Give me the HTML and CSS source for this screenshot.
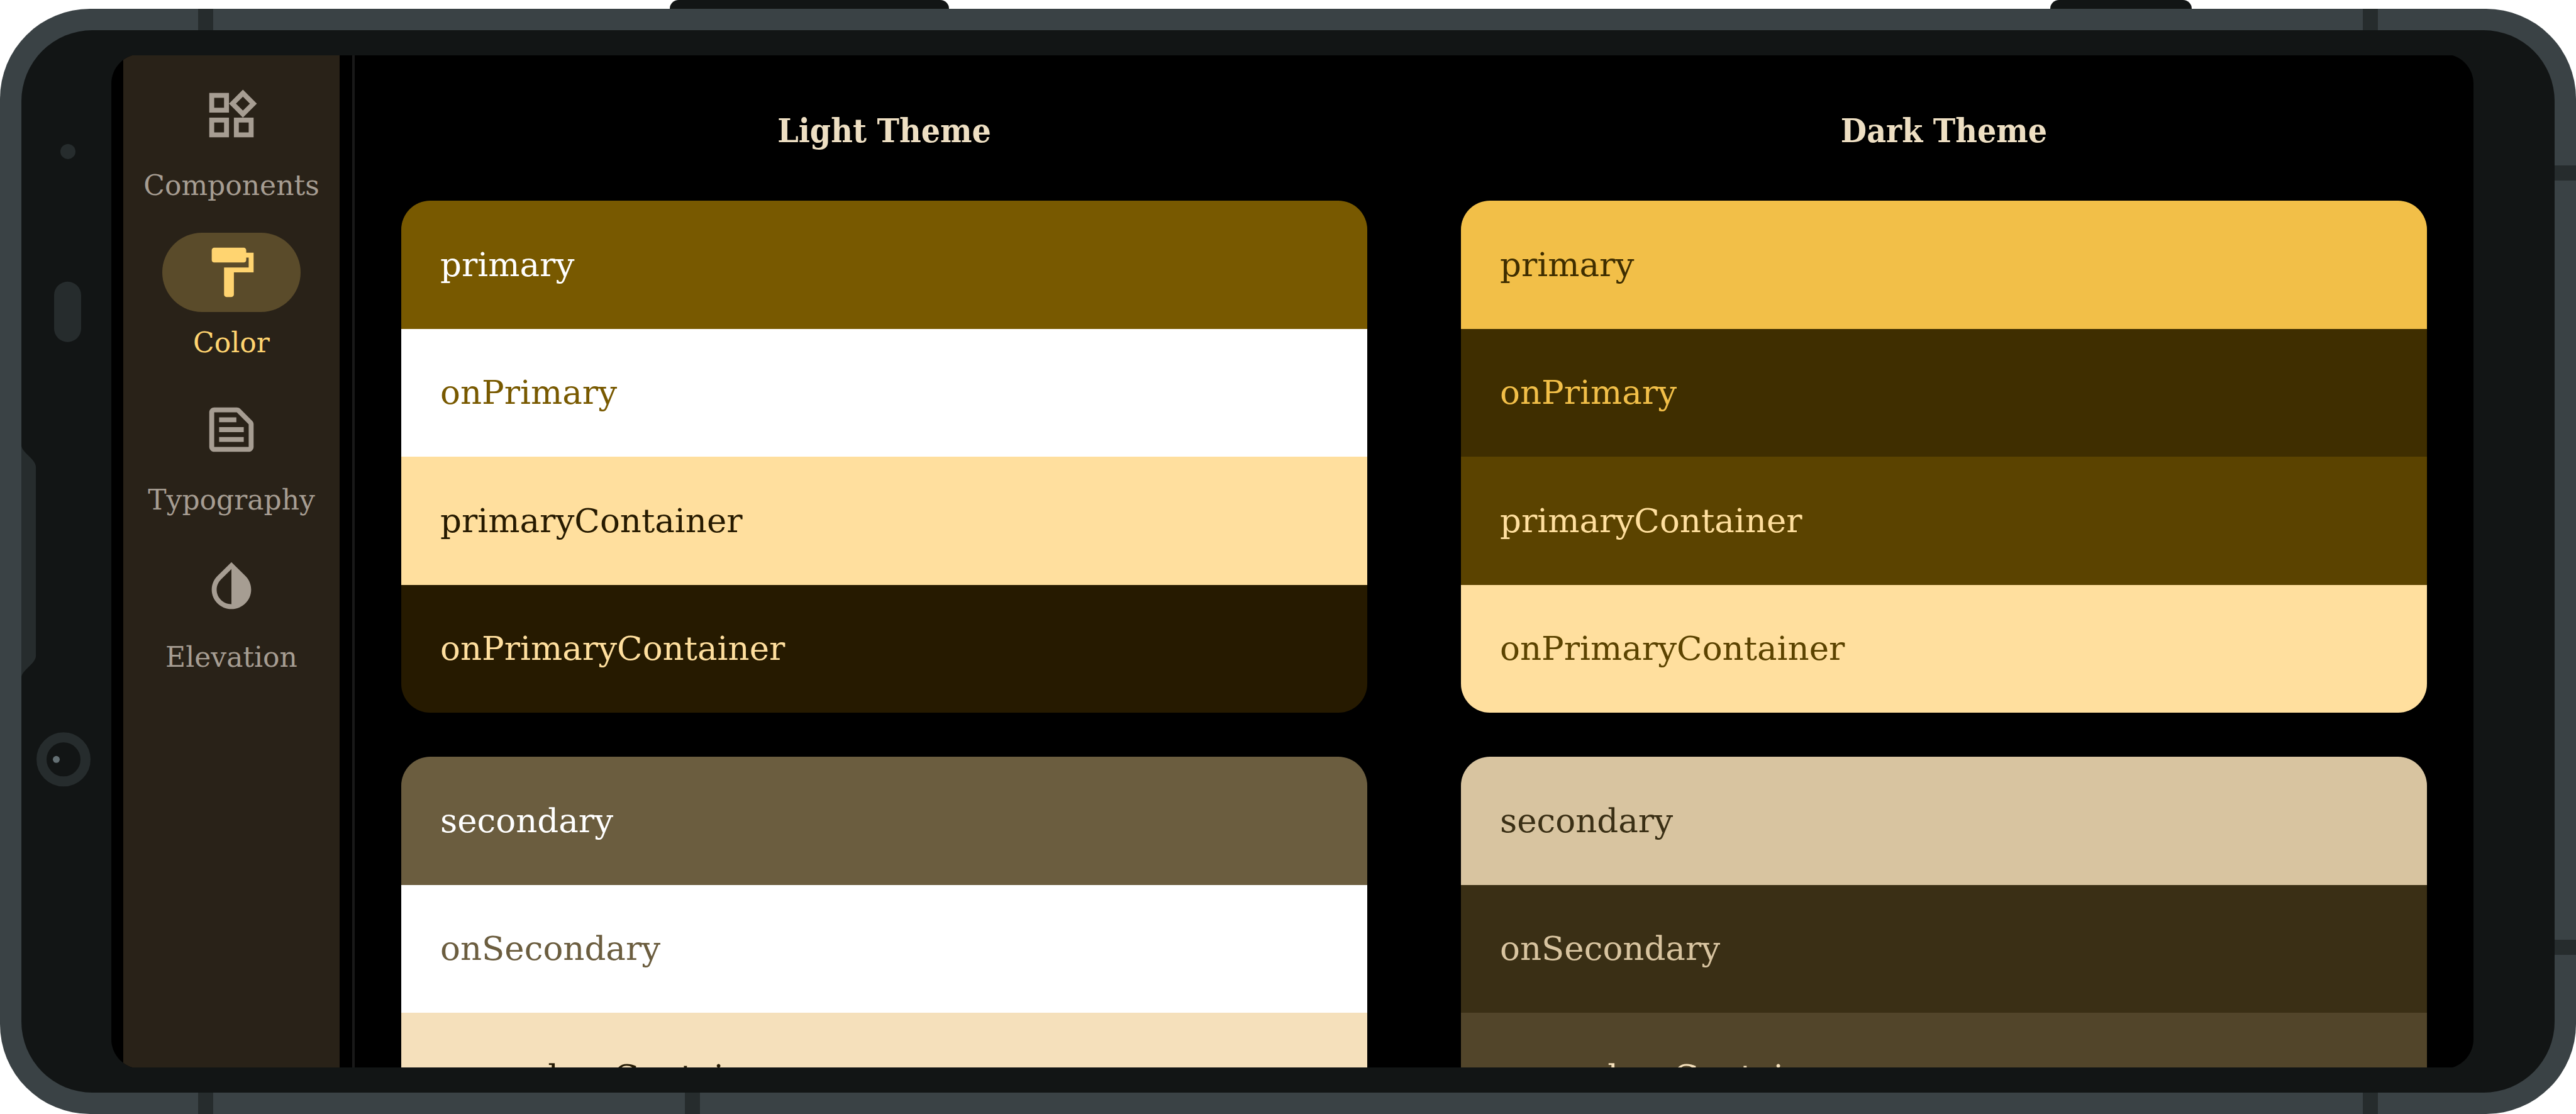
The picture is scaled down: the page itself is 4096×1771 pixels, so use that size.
FILE: index.html
```html
<!DOCTYPE html>
<html lang="en">
<head>
<meta charset="utf-8">
<title>Color palettes</title>
<link rel="stylesheet" href="styles.css">
</head>
<body>
<div class="device">
  <span class="key key-long"></span>
  <span class="key key-short"></span>
  <span class="band band-top band-start"></span>
  <span class="band band-top band-end"></span>
  <span class="band band-bottom band-start"></span>
  <span class="band band-bottom band-middle"></span>
  <span class="band band-bottom band-end"></span>
  <span class="band band-side band-upper"></span>
  <span class="band band-side band-lower"></span>

  <div class="bezel">
    <svg class="sensors" viewBox="0 0 143 1690" aria-hidden="true">
      <circle cx="74" cy="193" r="12" fill="#262c2d"/>
      <rect x="52" y="400" width="43" height="96" rx="21.5" fill="#262c2d"/>
      <path d="M0 660C0 672 23 682 23 695V995C23 1008 0 1018 0 1030Z" fill="#262c2d"/>
      <circle cx="67" cy="1160" r="35" fill="none" stroke="#262c2d" stroke-width="16"/>
      <circle cx="55.500" cy="1160" r="5.500" fill="#636f73"/>
    </svg>

    <div class="screen">
      <nav class="rail">
        <a class="destination" href="#components">
          <span class="indicator"><svg class="icon" viewBox="0 0 24 24" aria-hidden="true"><path d="M16.660 4.520l2.830 2.830-2.830 2.830-2.830-2.830 2.830-2.830M9 5v4H5V5h4m10 10v4h-4v-4h4M9 15v4H5v-4h4m7.660-13.310L11 7.340 16.660 13l5.660-5.660-5.660-5.650zM11 3H3v8h8V3zm10 10h-8v8h8v-8zm-10 0H3v8h8v-8z"/></svg></span>
          <span class="label">Components</span>
        </a>
        <a class="destination selected" href="#color" aria-current="page">
          <span class="indicator"><svg class="icon" viewBox="0 0 24 24" aria-hidden="true"><path d="M18 4V3c0-.55-.45-1-1-1H5c-.55 0-1 .45-1 1v4c0 .55.45 1 1 1h12c.55 0 1-.45 1-1V6h1v4H9v11c0 .55.45 1 1 1h2c.55 0 1-.45 1-1v-9h8V4h-3z"/></svg></span>
          <span class="label">Color</span>
        </a>
        <a class="destination" href="#typography">
          <span class="indicator"><svg class="icon" viewBox="0 0 24 24" aria-hidden="true"><path d="M14.170 5L19 9.830V19H5V5h9.170m0-2H5c-1.100 0-2 .9-2 2v14c0 1.100.9 2 2 2h14c1.100 0 2-.9 2-2V9.830c0-.53-.21-1.040-.59-1.410l-4.830-4.830C15.210 3.210 14.700 3 14.170 3zM7 15h10v2H7v-2zm0-4h10v2H7v-2zm0-4h7v2H7V7z"/></svg></span>
          <span class="label">Typography</span>
        </a>
        <a class="destination" href="#elevation">
          <span class="indicator"><svg class="icon" viewBox="0 0 24 24" aria-hidden="true"><path d="M12 4.810V19c-3.310 0-6-2.630-6-5.870 0-1.560.62-3.030 1.750-4.140L12 4.810M6.350 7.560C4.900 8.990 4 10.960 4 13.130 4 17.480 7.580 21 12 21s8-3.520 8-7.870c0-2.170-.9-4.140-2.350-5.570L12 2 6.350 7.560z"/></svg></span>
          <span class="label">Elevation</span>
        </a>
      </nav>

      <main class="themes" id="color">
        <section class="theme">
          <h2 class="title">Light Theme</h2>
          <ul class="card">
            <li class="swatch light-primary">primary</li>
            <li class="swatch light-on-primary">onPrimary</li>
            <li class="swatch light-primary-container">primaryContainer</li>
            <li class="swatch light-on-primary-container">onPrimaryContainer</li>
          </ul>
          <ul class="card">
            <li class="swatch light-secondary">secondary</li>
            <li class="swatch light-on-secondary">onSecondary</li>
            <li class="swatch light-secondary-container">secondaryContainer</li>
          </ul>
        </section>
        <section class="theme">
          <h2 class="title">Dark Theme</h2>
          <ul class="card">
            <li class="swatch dark-primary">primary</li>
            <li class="swatch dark-on-primary">onPrimary</li>
            <li class="swatch dark-primary-container">primaryContainer</li>
            <li class="swatch dark-on-primary-container">onPrimaryContainer</li>
          </ul>
          <ul class="card">
            <li class="swatch dark-secondary">secondary</li>
            <li class="swatch dark-on-secondary">onSecondary</li>
            <li class="swatch dark-secondary-container">secondaryContainer</li>
          </ul>
        </section>
      </main>
    </div>
  </div>
</div>
</body>
</html>
```
FILE: styles.css
```css
* {
  box-sizing: border-box;
}

body {
  margin: 0;
  height: 100vh;
  padding-top: 14px;
  overflow: hidden;
  background: #ffffff;
  font-family: "Roboto Slab", "DejaVu Serif", serif;
}

/* Phone body */
.device {
  position: relative;
  height: 100%;
  padding: 34px;
  border-radius: 143px;
  background: #3a4245;
}

.key {
  position: absolute;
  bottom: 100%;
  height: 14px;
  border-radius: 14px 14px 0 0;
  background: #121515;
}

.key-long {
  left: 26%;
  width: 444px;
}

.key-short {
  right: 611px;
  width: 225px;
}

.band {
  position: absolute;
  background: #262c2d;
}

.band-top,
.band-bottom {
  width: 24px;
  height: 34px;
}

.band-top { top: 0; }
.band-bottom { bottom: 0; }
.band-start { left: 315px; }
.band-middle { left: 1089px; }
.band-end { right: 315px; }

.band-side {
  right: 0;
  width: 34px;
  height: 24px;
}

.band-upper { top: 249px; }
.band-lower { bottom: 253px; }

.bezel {
  display: grid;
  grid-template-columns: 143px minmax(0, 1fr) 129px;
  grid-template-rows: 100%;
  height: 100%;
  border-radius: 113px;
  background: #121515;
}

.sensors {
  width: 143px;
  height: 100%;
}

.screen {
  display: flex;
  margin: 40px 0;
  min-height: 0;
  overflow: hidden;
  background: #000000;
  clip-path: inset(-2px 0 round 47px);
}

/* Navigation rail */
.rail {
  flex: none;
  width: 344px;
  margin: 0 20px 0 19px;
  padding-top: 32px;
  display: flex;
  flex-direction: column;
  gap: 44px;
  background: #292218;
}

.destination {
  display: flex;
  flex-direction: column;
  align-items: center;
  gap: 18px;
  color: #a69d92;
  text-decoration: none;
}

.indicator {
  display: flex;
  align-items: center;
  justify-content: center;
  width: 220px;
  height: 126px;
  border-radius: 63px;
}

.icon {
  width: 94px;
  height: 94px;
  fill: currentColor;
}

.label {
  font-size: 44px;
  line-height: 62px;
}

.selected {
  color: #ffd470;
}

.selected .indicator {
  background: #5a4b2a;
}

/* Palettes */
.themes {
  flex: 1;
  display: grid;
  grid-template-columns: 1fr 1fr;
  align-items: start;
  gap: 149px;
  padding: 0 74px;
  border-left: 4px solid #191919;
}

.theme {
  display: grid;
  gap: 70px;
}

.title {
  margin: 78px 0 0;
  font-family: "Roboto Slab", "DejaVu Serif Condensed", "DejaVu Serif", serif;
  font-size: 53px;
  line-height: 83px;
  font-weight: 700;
  text-align: center;
  color: #eedfc3;
}

.card {
  display: grid;
  grid-auto-rows: 1fr;
  margin: 0;
  padding: 0;
  min-height: 814px;
  list-style: none;
  border-radius: 46px;
  overflow: hidden;
}

.card + .card {
  min-height: 611px;
  border-radius: 46px 46px 0 0;
}

.swatch {
  display: flex;
  align-items: center;
  padding: 0 62px;
  font-size: 53px;
  line-height: 72px;
}

.light-primary { background: #785900; color: #ffffff; }
.light-on-primary { background: #ffffff; color: #785900; }
.light-primary-container { background: #ffdf9e; color: #261a00; }
.light-on-primary-container { background: #261a00; color: #ffdf9e; }
.light-secondary { background: #6b5d3f; color: #ffffff; }
.light-on-secondary { background: #ffffff; color: #6b5d3f; }
.light-secondary-container { background: #f5e0bb; color: #241a04; }

.dark-primary { background: #f2bf48; color: #3f2e00; }
.dark-on-primary { background: #3f2e00; color: #f2bf48; }
.dark-primary-container { background: #5b4300; color: #ffdf9e; }
.dark-on-primary-container { background: #ffdf9e; color: #5b4300; }
.dark-secondary { background: #d8c4a0; color: #3a2f15; }
.dark-on-secondary { background: #3a2f15; color: #d8c4a0; }
.dark-secondary-container { background: #52452a; color: #f5e0bb; }
```
